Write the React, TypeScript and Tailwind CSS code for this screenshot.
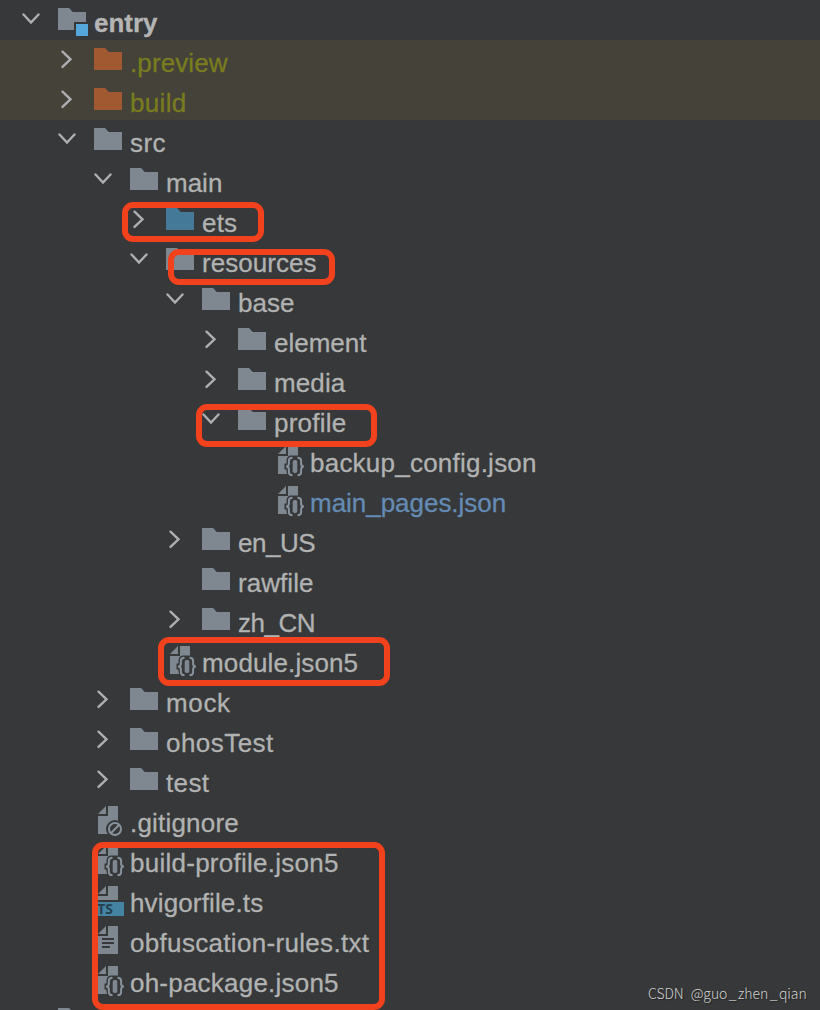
import type { ReactNode } from "react";

type IconKind = "module" | "folder" | "excluded" | "source" | "json" | "ignored" | "ts" | "text";

type TreeNode = {
  name: string;
  depth: number;
  icon: IconKind;
  state?: "open" | "closed";
  tone?: string;
  spacing?: string;
};

const nodes: TreeNode[] = [
  { name: "entry", depth: 0, icon: "module", state: "open", tone: "font-bold text-[#b5b5b5]" },
  { name: ".preview", depth: 1, icon: "excluded", state: "closed", tone: "text-[#797d1e]", spacing: "tracking-[0.1px]" },
  { name: "build", depth: 1, icon: "excluded", state: "closed", tone: "text-[#797d1e]", spacing: "tracking-[0.35px]" },
  { name: "src", depth: 1, icon: "folder", state: "open", spacing: "tracking-[0.4px]" },
  { name: "main", depth: 2, icon: "folder", state: "open" },
  { name: "ets", depth: 3, icon: "source", state: "closed", spacing: "tracking-[0.2px]" },
  { name: "resources", depth: 3, icon: "folder", state: "open", spacing: "tracking-[0.05px]" },
  { name: "base", depth: 4, icon: "folder", state: "open" },
  { name: "element", depth: 5, icon: "folder", state: "closed" },
  { name: "media", depth: 5, icon: "folder", state: "closed", spacing: "tracking-[0.1px]" },
  { name: "profile", depth: 5, icon: "folder", state: "open", spacing: "tracking-[0.25px]" },
  { name: "backup_config.json", depth: 6, icon: "json", spacing: "tracking-[0.23px]" },
  { name: "main_pages.json", depth: 6, icon: "json", tone: "text-[#648bb5]", spacing: "tracking-[-0.03px]" },
  { name: "en_US", depth: 4, icon: "folder", state: "closed", spacing: "tracking-[-0.5px]" },
  { name: "rawfile", depth: 4, icon: "folder", spacing: "tracking-[0.05px]" },
  { name: "zh_CN", depth: 4, icon: "folder", state: "closed", spacing: "tracking-[-0.5px]" },
  { name: "module.json5", depth: 3, icon: "json", spacing: "tracking-[0.13px]" },
  { name: "mock", depth: 2, icon: "folder", state: "closed", spacing: "tracking-[0.65px]" },
  { name: "ohosTest", depth: 2, icon: "folder", state: "closed", spacing: "tracking-[0.45px]" },
  { name: "test", depth: 2, icon: "folder", state: "closed", spacing: "tracking-[0.35px]" },
  { name: ".gitignore", depth: 1, icon: "ignored", spacing: "tracking-[0.2px]" },
  { name: "build-profile.json5", depth: 1, icon: "json", spacing: "tracking-[0.26px]" },
  { name: "hvigorfile.ts", depth: 1, icon: "ts", spacing: "tracking-[0.14px]" },
  { name: "obfuscation-rules.txt", depth: 1, icon: "text", spacing: "tracking-[0.32px]" },
  { name: "oh-package.json5", depth: 1, icon: "json", spacing: "tracking-[0.22px]" },
  { name: "", depth: 0, icon: "folder" },
];

// Red frames drawn over the tree
const marks = [
  "left-[122px] top-[202px] w-[142px] h-[40px]",
  "left-[168px] top-[249px] w-[167px] h-[36px]",
  "left-[196px] top-[404px] w-[181px] h-[43px]",
  "left-[158px] top-[637px] w-[232px] h-[49px]",
  "left-[92px] top-[842px] w-[293px] h-[168px]",
];

const FOLDER = "M2 4h10.5c1.6 0 2.4 2.8 4.5 4H30v18H2z";
const SHEET = "M16 2h10v28H6V12h10z";
const CORNER = "M14 2v8H6z";

const Page = ({ children }: { children?: ReactNode }) => (
  <>
    <path d={SHEET} fill="#7f8790" />
    <path d={CORNER} fill="#7f8790" />
    {children}
  </>
);

const NodeIcon = ({ kind }: { kind: IconKind }) => (
  <svg width="32" height="32" viewBox="0 0 32 32" className="block shrink-0 overflow-visible" aria-hidden>
    {kind === "folder" && <path d={FOLDER} fill="#7f8790" />}
    {kind === "excluded" && <path d={FOLDER} fill="#a05930" />}
    {kind === "source" && <path d={FOLDER} fill="#447a97" />}
    {kind === "module" && (
      <>
        <path d="M2 4h10.5c1.6 0 2.4 2.8 4.5 4H30v10H18v8H2z" fill="#7f8790" />
        <path d="M20 20h12v12H20z" fill="#55a8dc" />
      </>
    )}
    {kind === "json" && (
      <Page>
        <path d="M19.5 11.5h8V32h-8c-3.500 0-5-2-5-5v-1.500H12.500V19.500h2V17c0-3.500 1.800-5.500 5-5.500z" fill="#363839" />
        <g fill="none" stroke="#87929c" strokeWidth="2">
          <path d="M20.500 13.800c-2.800 0-3.600 1-3.600 3v2.700c0 2-.9 3-2.800 3 1.900 0 2.800 1 2.800 3v2.700c0 2 .8 3 3.600 3" />
          <path d="M25.500 13.800c2.800 0 3.600 1 3.600 3v2.700c0 2 .9 3 2.800 3-1.900 0-2.800 1-2.800 3v2.700c0 2-.8 3-3.600 3" />
        </g>
        <rect x="20.700" y="16" width="4.600" height="13" rx="1.800" fill="#7f8790" />
      </Page>
    )}
    {kind === "ignored" && (
      <Page>
        <circle cx="23" cy="25" r="9" fill="#363839" />
        <circle cx="23" cy="25" r="6" fill="none" stroke="#87929c" strokeWidth="2" />
        <path d="M18.800 29.200l8.400-8.400" stroke="#87929c" strokeWidth="2" />
      </Page>
    )}
    {kind === "ts" && (
      <>
        <path d="M16 2h10v14H6v-4h10z" fill="#7f8790" />
        <path d={CORNER} fill="#7f8790" />
        <path d="M2 18h30v14H2z" fill="#4583a3" />
        <text x="5.200" y="30" fontSize="13.800" fontWeight="700" fontFamily="Open Sans, sans-serif" fill="#24404f">
          TS
        </text>
      </>
    )}
    {kind === "text" && (
      <Page>
        <path d="M10 14h12v2H10zM10 18h12v2H10zM10 22h8v2h-8z" fill="#363839" />
      </Page>
    )}
  </svg>
);

const Chevron = ({ state }: { state?: "open" | "closed" }) => (
  <svg width="20" height="32" viewBox="0 0 20 32" className="block shrink-0" aria-hidden>
    {state && (
      <path
        d={state === "open" ? "M3.500 10.500l7.500 8 7.500-8" : "M6.500 7.700l8 7.600-8 7.600"}
        fill="none"
        stroke="#adafb0"
        strokeWidth="2.400"
        strokeLinecap="round"
      />
    )}
  </svg>
);

const TreeRow = ({ node }: { node: TreeNode }) => (
  <li
    className={`flex h-10 shrink-0 items-start pt-1 ${node.icon === "excluded" ? "bg-[#444239]" : ""}`}
  >
    <div className="shrink-0" style={{ width: 20 + node.depth * 36 }} />
    <Chevron state={node.state} />
    <div className="w-4 shrink-0" />
    <NodeIcon kind={node.icon} />
    <span
      className={`ml-1.5 mt-0.5 whitespace-pre text-[26px] leading-[34px] [-webkit-text-stroke:0.3px_currentColor] ${node.tone ?? "text-[#b1b2b2]"} ${node.spacing ?? ""}`}
    >
      {node.name}
    </span>
  </li>
);

const App = () => (
  <main className="relative h-[1010px] w-[820px] overflow-hidden bg-[#363839] font-['Liberation_Sans',Arial,sans-serif]">
    <ul className="flex flex-col">
      {nodes.map((node, i) => (
        <TreeRow key={i} node={node} />
      ))}
    </ul>
    {marks.map((place) => (
      <div key={place} className={`absolute rounded-[11px] border-[6px] border-[#f1411d] ${place}`} />
    ))}
    <p className="absolute bottom-[7px] left-[648px] whitespace-pre text-[14px] font-light leading-5 tracking-[-0.06px] text-[#d0d0d0] [text-shadow:1px_1px_1px_#222] font-['Noto_Sans_CJK_SC',sans-serif]">
      CSDN <span className="ml-1">@guo</span>
      <span className="mx-[1.5px]">_</span>zhen<span className="mx-[1.5px]">_</span>qian
    </p>
  </main>
);

export default App;
